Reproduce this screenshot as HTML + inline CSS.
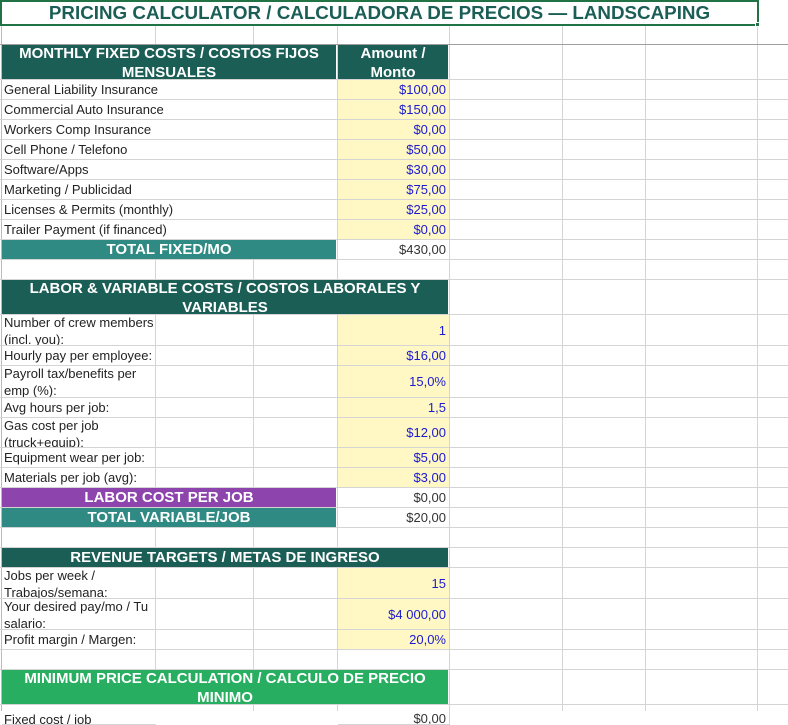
<!DOCTYPE html>
<html><head><meta charset="utf-8">
<style>
*{margin:0;padding:0;box-sizing:border-box}
body{width:788px;height:711px;overflow:hidden;background:#fff;position:relative;font-family:"Liberation Sans",Arial,sans-serif;font-size:13px;color:#222}
.v{position:absolute;top:25px;bottom:0;width:1px;background:#d4d4d4}
.h{position:absolute;left:0;width:788px;height:1px;background:#d4d4d4}
.c{position:absolute;overflow:hidden;white-space:nowrap;background:#fff;border-right:1px solid #d4d4d4;border-bottom:1px solid #d4d4d4}
.l{padding-left:2px;line-height:19px}
.w{white-space:normal;line-height:16.5px;padding-left:2px;padding-top:0}
.y{background:#fff8c5;color:#1a1ad0;text-align:right;padding-right:3px;display:flex;align-items:center;justify-content:flex-end}
.r{color:#333;text-align:right;padding-right:3px;display:flex;align-items:center;justify-content:flex-end}
.hd{color:#fff;font-weight:bold;font-size:15px;text-align:center;white-space:normal;line-height:18.5px;border:none;background:#1b5e56;border-right:1px solid #fff}
.s{line-height:20px}
</style></head><body>
<div class="v" style="left:1px;background:#bbb"></div>
<div class="v" style="left:155px"></div>
<div class="v" style="left:253px"></div>
<div class="v" style="left:337px"></div>
<div class="v" style="left:449px"></div>
<div class="v" style="left:562px"></div>
<div class="v" style="left:645px"></div>
<div class="v" style="left:757px"></div>
<div class="h" style="top:44px;background:#9e9e9e"></div>
<div class="h" style="top:259px"></div><div class="h" style="top:279px"></div>
<div class="h" style="top:527px"></div><div class="h" style="top:547px"></div>
<div class="h" style="top:649px"></div><div class="h" style="top:669px"></div>
<div class="h" style="top:79px"></div><div class="h" style="top:99px"></div><div class="h" style="top:119px"></div><div class="h" style="top:139px"></div><div class="h" style="top:159px"></div><div class="h" style="top:179px"></div><div class="h" style="top:199px"></div><div class="h" style="top:219px"></div><div class="h" style="top:239px"></div>
<div class="h" style="top:314px"></div><div class="h" style="top:345px"></div><div class="h" style="top:365px"></div><div class="h" style="top:397px"></div><div class="h" style="top:417px"></div><div class="h" style="top:447px"></div><div class="h" style="top:467px"></div><div class="h" style="top:487px"></div><div class="h" style="top:507px"></div>
<div class="h" style="top:567px"></div><div class="h" style="top:598px"></div><div class="h" style="top:629px"></div><div class="h" style="top:704px"></div>

<div style="position:absolute;left:0;top:0;width:759px;height:26px;border:2px solid #217346;background:#fff;color:#1b5e56;font-weight:bold;font-size:18.8px;text-align:center;line-height:22px">PRICING CALCULATOR / CALCULADORA DE PRECIOS — LANDSCAPING</div>
<div style="position:absolute;left:755px;top:22px;width:5px;height:5px;background:#217346;border:1px solid #fff"></div>

<div class="c hd" style="left:2px;top:45px;width:335px;height:34px">MONTHLY FIXED COSTS / COSTOS FIJOS MENSUALES</div>
<div class="c hd" style="left:338px;top:45px;width:111px;height:34px;padding:0 12px">Amount / Monto</div>
<div class="c l" style="left:2px;top:80px;width:336px;height:20px">General Liability Insurance</div><div class="c y" style="left:338px;top:80px;width:112px;height:20px">$100,00</div>
<div class="c l" style="left:2px;top:100px;width:336px;height:20px">Commercial Auto Insurance</div><div class="c y" style="left:338px;top:100px;width:112px;height:20px">$150,00</div>
<div class="c l" style="left:2px;top:120px;width:336px;height:20px">Workers Comp Insurance</div><div class="c y" style="left:338px;top:120px;width:112px;height:20px">$0,00</div>
<div class="c l" style="left:2px;top:140px;width:336px;height:20px">Cell Phone / Telefono</div><div class="c y" style="left:338px;top:140px;width:112px;height:20px">$50,00</div>
<div class="c l" style="left:2px;top:160px;width:336px;height:20px">Software/Apps</div><div class="c y" style="left:338px;top:160px;width:112px;height:20px">$30,00</div>
<div class="c l" style="left:2px;top:180px;width:336px;height:20px">Marketing / Publicidad</div><div class="c y" style="left:338px;top:180px;width:112px;height:20px">$75,00</div>
<div class="c l" style="left:2px;top:200px;width:336px;height:20px">Licenses &amp; Permits (monthly)</div><div class="c y" style="left:338px;top:200px;width:112px;height:20px">$25,00</div>
<div class="c l" style="left:2px;top:220px;width:336px;height:20px">Trailer Payment (if financed)</div><div class="c y" style="left:338px;top:220px;width:112px;height:20px">$0,00</div>
<div class="c hd s" style="left:2px;top:240px;width:335px;height:19px;background:#2e8a82">TOTAL FIXED/MO</div><div class="c r" style="left:338px;top:240px;width:112px;height:20px">$430,00</div>

<div class="c hd" style="left:2px;top:280px;width:447px;height:34px">LABOR &amp; VARIABLE COSTS / COSTOS LABORALES Y VARIABLES</div>
<div class="c w" style="left:2px;top:315px;width:154px;height:31px">Number of crew members (incl. you):</div><div class="c y" style="left:338px;top:315px;width:112px;height:31px">1</div>
<div class="c l" style="left:2px;top:346px;width:154px;height:20px">Hourly pay per employee:</div><div class="c y" style="left:338px;top:346px;width:112px;height:20px">$16,00</div>
<div class="c w" style="left:2px;top:366px;width:154px;height:32px">Payroll tax/benefits per emp (%):</div><div class="c y" style="left:338px;top:366px;width:112px;height:32px">15,0%</div>
<div class="c l" style="left:2px;top:398px;width:154px;height:20px">Avg hours per job:</div><div class="c y" style="left:338px;top:398px;width:112px;height:20px">1,5</div>
<div class="c w" style="left:2px;top:418px;width:154px;height:30px">Gas cost per job (truck+equip):</div><div class="c y" style="left:338px;top:418px;width:112px;height:30px">$12,00</div>
<div class="c l" style="left:2px;top:448px;width:154px;height:20px">Equipment wear per job:</div><div class="c y" style="left:338px;top:448px;width:112px;height:20px">$5,00</div>
<div class="c l" style="left:2px;top:468px;width:154px;height:20px">Materials per job (avg):</div><div class="c y" style="left:338px;top:468px;width:112px;height:20px">$3,00</div>
<div class="c hd s" style="left:2px;top:488px;width:335px;height:19px;background:#8e44ad">LABOR COST PER JOB</div><div class="c r" style="left:338px;top:488px;width:112px;height:20px">$0,00</div>
<div class="c hd s" style="left:2px;top:508px;width:335px;height:19px;background:#2e8a82">TOTAL VARIABLE/JOB</div><div class="c r" style="left:338px;top:508px;width:112px;height:20px">$20,00</div>

<div class="c hd s" style="left:2px;top:548px;width:447px;height:19px">REVENUE TARGETS / METAS DE INGRESO</div>
<div class="c w" style="left:2px;top:568px;width:154px;height:31px">Jobs per week / Trabajos/semana:</div><div class="c y" style="left:338px;top:568px;width:112px;height:31px">15</div>
<div class="c w" style="left:2px;top:599px;width:154px;height:31px">Your desired pay/mo / Tu salario:</div><div class="c y" style="left:338px;top:599px;width:112px;height:31px">$4 000,00</div>
<div class="c l" style="left:2px;top:630px;width:154px;height:20px">Profit margin / Margen:</div><div class="c y" style="left:338px;top:630px;width:112px;height:20px">20,0%</div>

<div class="c hd" style="left:2px;top:670px;width:447px;height:34px;background:#27ae60;padding:0 10px">MINIMUM PRICE CALCULATION / CALCULO DE PRECIO MINIMO</div>
<div class="c l" style="left:2px;top:705px;width:154px;height:20px;padding-top:5px;border-right:none">Fixed cost / job</div><div class="c r" style="left:338px;top:705px;width:112px;height:20px;align-items:flex-start;padding-top:6px">$0,00</div>
</body></html>
